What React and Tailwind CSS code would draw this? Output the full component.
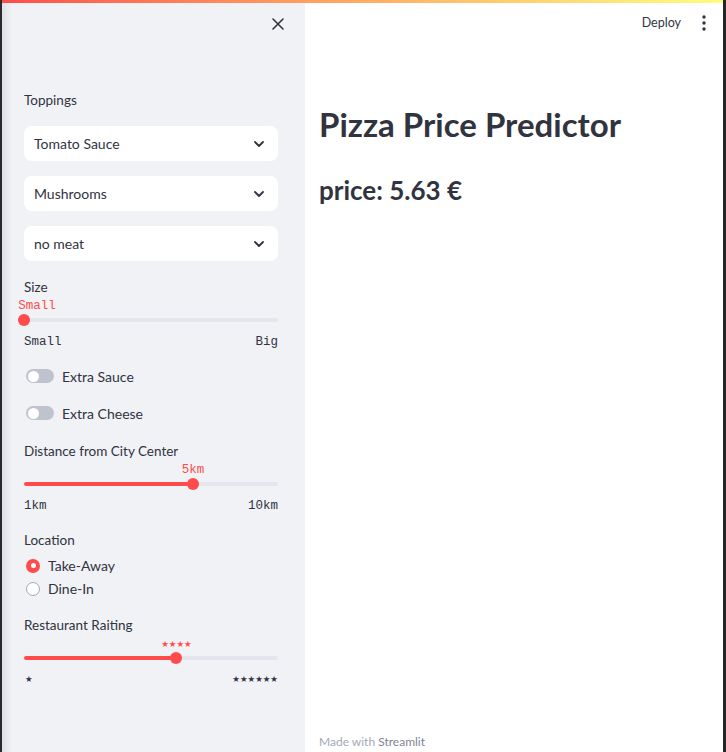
import React from 'react';

const sans = { fontFamily: 'Lato, "Noto Sans", sans-serif' };
const mono = { fontFamily: '"Liberation Mono", monospace' };
const stars = { fontFamily: '"DejaVu Sans", sans-serif' };

function Chevron() {
  return (
    <svg width="12" height="8" viewBox="0 0 12 8" className="text-[#31333f]">
      <polyline points="2,2 6,6 10,2" fill="none" stroke="currentColor" strokeWidth="1.8" strokeLinecap="round" strokeLinejoin="round" />
    </svg>
  );
}

function Select({ value }) {
  return (
    <div className="h-[35px] rounded-lg bg-white flex items-center justify-between pl-[10px] pr-[13px] text-[14px] text-[#31333f]">
      <span>{value}</span>
      <Chevron />
    </div>
  );
}

function Slider({ pct, label, labelShift = 0, left, right, starMode = false }) {
  return (
    <div>
      <div className="relative h-[18px]">
        <span
          className={`absolute top-[2px] text-[#ff4b4b] leading-[18px] whitespace-nowrap ${starMode ? 'text-[8.5px]' : 'text-[12.5px]'}`}
          style={{ left: pct + '%', transform: `translateX(calc(-50% + ${labelShift}px))`, ...(starMode ? stars : mono) }}
        >
          {label}
        </span>
      </div>
      <div className="relative h-[14px] flex items-center">
        <div className="w-full h-[4px] rounded-full bg-[#e3e6ec]" />
        <div className="absolute left-0 h-[4px] rounded-full bg-[#ff4b4b]" style={{ width: pct + '%' }} />
        <div className="absolute w-[12px] h-[12px] rounded-full bg-[#ff4b4b] -translate-x-1/2" style={{ left: pct + '%' }} />
      </div>
      <div
        className={`flex justify-between text-[#31333f] leading-[16px] ${starMode ? 'mt-[6px] text-[8.5px]' : 'mt-[7px] text-[12.5px]'}`}
        style={starMode ? stars : mono}
      >
        <span className={starMode ? 'pl-[1px]' : ''}>{left}</span>
        <span>{right}</span>
      </div>
    </div>
  );
}

function Toggle({ label }) {
  return (
    <div className="flex items-center gap-[8px] pl-[2px] h-[20px]">
      <div className="w-[28px] h-[14px] rounded-full bg-[#bfc3cd] flex items-center px-[2px]">
        <div className="w-[11px] h-[11px] rounded-full bg-white" />
      </div>
      <span className="text-[14px] text-[#31333f]">{label}</span>
    </div>
  );
}

function Radio({ label, checked }) {
  return (
    <div className="flex items-center gap-[8px] pl-[2px] h-[23px]">
      {checked ? (
        <div className="w-[14px] h-[14px] rounded-full bg-[#ff4b4b] flex items-center justify-center">
          <div className="w-[5px] h-[5px] rounded-full bg-white" />
        </div>
      ) : (
        <div className="w-[14px] h-[14px] rounded-full border border-[#a3a8b4] bg-white" />
      )}
      <span className="text-[14px] text-[#31333f]">{label}</span>
    </div>
  );
}

function Label({ children }) {
  return <div className="text-[13.5px] text-[#31333f] leading-[16px]">{children}</div>;
}

export default function App() {
  return (
    <div className="h-[752px] w-[726px] flex overflow-hidden" style={sans}>
      <div className="w-[2px] bg-[#2a2a2a]" />
      <div className="flex-1 flex flex-col">
        <div className="h-[3px] bg-gradient-to-r from-[#ff4b4b] to-[#fffd80]" />
        <div className="flex-1 flex">
          <aside className="w-[303px] bg-[#f0f2f6] flex flex-col pl-[22px] pr-[27px] relative">
            <div className="absolute inset-y-0 left-0 w-[10px] bg-gradient-to-r from-[#dfe1e5] to-transparent" />
            <div className="h-[42px] flex items-center justify-end -mr-[6px]">
              <svg width="12" height="12" viewBox="0 0 12 12">
                <path d="M1 1 L11 11 M11 1 L1 11" stroke="#31333f" strokeWidth="1.6" strokeLinecap="round" />
              </svg>
            </div>
            <div className="mt-[47px]"><Label>Toppings</Label></div>
            <div className="mt-[18px] flex flex-col gap-[15px]">
              <Select value="Tomato Sauce" />
              <Select value="Mushrooms" />
              <Select value="no meat" />
            </div>
            <div className="mt-[18px]"><Label>Size</Label></div>
            <Slider pct={0} label="Small" labelShift={13} left="Small" right="Big" />
            <div className="mt-[16px] flex flex-col gap-[17px]">
              <Toggle label="Extra Sauce" />
              <Toggle label="Extra Cheese" />
            </div>
            <div className="mt-[20px]"><Label>Distance from City Center</Label></div>
            <Slider pct={66.5} label="5km" left="1km" right="10km" />
            <div className="mt-[18px]"><Label>Location</Label></div>
            <div className="mt-[6px] flex flex-col">
              <Radio label="Take-Away" checked />
              <Radio label="Dine-In" />
            </div>
            <div className="mt-[17px]"><Label>Restaurant Raiting</Label></div>
            <Slider pct={60} label="★★★★" starMode left="★" right="★★★★★★" />
          </aside>
          <main className="flex-1 bg-white flex flex-col relative">
            <div className="h-[40px] flex items-center justify-end pr-[17px] gap-[21px]">
              <span className="text-[12.5px] text-[#31333f]">Deploy</span>
              <svg width="4" height="16" viewBox="0 0 4 16">
                <circle cx="2" cy="2" r="1.7" fill="#31333f" />
                <circle cx="2" cy="8" r="1.7" fill="#31333f" />
                <circle cx="2" cy="14" r="1.7" fill="#31333f" />
              </svg>
            </div>
            <div className="pl-[14px] flex-1 flex flex-col">
              <h1 className="mt-[61px] text-[33px] font-bold text-[#31333f] leading-[40px]">Pizza Price Predictor</h1>
              <h2 className="mt-[29px] text-[26px] font-bold text-[#31333f] leading-[34px]">price: 5.63 €</h2>
              <div className="mt-auto mb-[1px] text-[12px] text-[#a3a8b4]">
                Made with <span className="text-[#808495]">Streamlit</span>
              </div>
            </div>
          </main>
        </div>
      </div>
      <div className="w-[3px] bg-[#262626]" />
    </div>
  );
}
